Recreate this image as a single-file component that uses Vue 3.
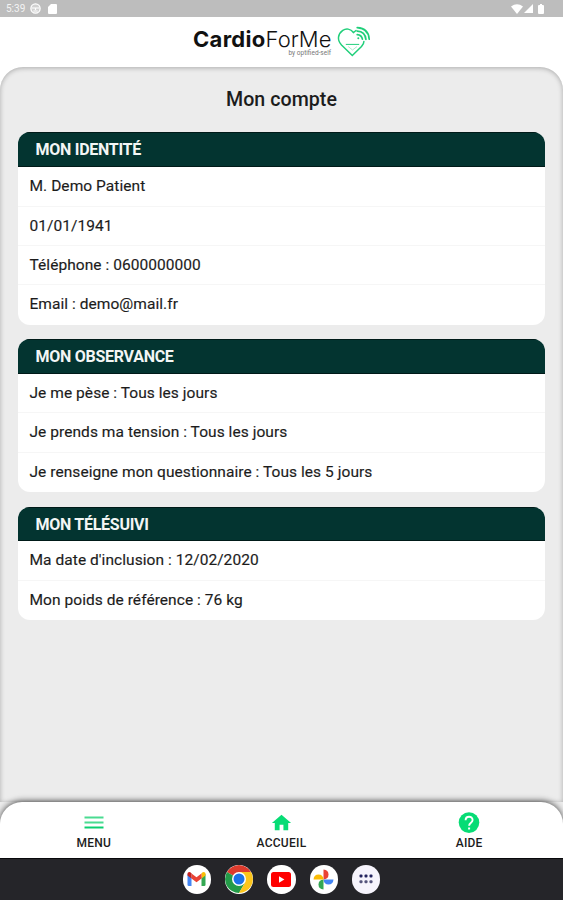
<script setup>
const sections = [
  {
    title: 'MON IDENTITÉ',
    rows: ['M. Demo Patient', '01/01/1941', 'Téléphone : 0600000000', 'Email : demo@mail.fr'],
  },
  {
    title: 'MON OBSERVANCE',
    rows: [
      'Je me pèse : Tous les jours',
      'Je prends ma tension : Tous les jours',
      'Je renseigne mon questionnaire : Tous les 5 jours',
    ],
  },
  {
    title: 'MON TÉLÉSUIVI',
    rows: ["Ma date d'inclusion : 12/02/2020", 'Mon poids de référence : 76 kg'],
  },
]
</script>

<template>
  <div class="screen">
    <div class="status">
      <div class="status-group">
        <span class="time">5:39</span>
        <svg class="status-face" width="11" height="11" viewBox="0 0 11 11">
          <circle cx="5.5" cy="5.5" r="4.6" fill="#d0d0d0" stroke="#fff" stroke-width="1.3" />
          <path d="M2 5h7M5.5 5v2M3.3 8h4.4" stroke="#fff" stroke-width="1.2" />
        </svg>
        <svg width="9" height="10" viewBox="0 0 9 10">
          <path d="M3 0h5q1 0 1 1v8q0 1-1 1H1q-1 0-1-1V3z" fill="#fff" />
        </svg>
      </div>
      <div class="status-group right">
        <svg width="12" height="10" viewBox="0 0 12 10">
          <path d="M0 2.6Q6-2 12 2.6L6 10z" fill="#fff" />
        </svg>
        <svg width="9" height="9" viewBox="0 0 9 9"><path d="M9 0v9H0z" fill="#fff" /></svg>
        <svg class="battery" width="6" height="10" viewBox="0 0 6 10">
          <path d="M2 0h2v1h1q1 0 1 1v7q0 1-1 1H1q-1 0-1-1V2q0-1 1-1h1z" fill="#fff" />
        </svg>
      </div>
    </div>

    <header class="brand">
      <div class="wordmark">
        <div class="name"><b>Cardio</b><span>ForMe</span></div>
        <div class="byline">by optified-self</div>
      </div>
      <svg class="heart" width="34" height="32" viewBox="0 0 34 32" fill="none" stroke="#20cf7a" stroke-width="1.5" stroke-linecap="round">
        <path d="M16.5 6.5C13.5 2.5 9 2.2 5.8 4.4C.8 8-.2 14 4.5 19L15.3 29.5L24.5 20.5Q27 17.5 26.9 15.5" />
        <path d="M16.5 6.5L19 4.5" />
        <path d="M9.2 18.4h12.6" stroke-width="1" />
        <path d="M11.5 20.8L15.5 24l4.2-3.2" stroke-width=".7" opacity=".55" />
        <path d="M20.2 1.6Q31.6 2.2 32.2 13.2M20.2 5.1Q28.2 5.5 28.9 13.4M20.2 8.6Q24.8 9 25.4 13.2" stroke-width="1.7" />
        <circle cx="21.3" cy="12.2" r="1" fill="#20cf7a" stroke="none" />
      </svg>
    </header>

    <main class="content">
      <h1>Mon compte</h1>
      <section v-for="section in sections" :key="section.title" class="card">
        <h2>{{ section.title }}</h2>
        <div v-for="row in section.rows" :key="row" class="row">{{ row }}</div>
      </section>
    </main>

    <div class="nav-wrap">
      <nav class="nav">
        <a class="tab">
          <svg width="22" height="22" viewBox="0 0 22 22">
            <path d="M1.5 5.5h19M1.5 10.5h19" stroke="#4bdb91" stroke-width="2" />
            <path d="M1.5 15.5h19" stroke="#0bcf70" stroke-width="2" />
          </svg>
          <span>MENU</span>
        </a>
        <a class="tab">
          <svg width="23" height="22" viewBox="0 0 24 24" preserveAspectRatio="none">
            <path d="M10 20v-6h4v6h5v-8h3L12 3 2 12h3v8z" fill="#07dc75" />
          </svg>
          <span>ACCUEIL</span>
        </a>
        <a class="tab">
          <svg width="24" height="22" viewBox="0 0 24 22">
            <circle cx="12" cy="10.6" r="10.3" fill="#07dc75" />
            <path d="M8.6 8.2C8.6 3.6 15.6 3.6 15.6 8.1C15.6 10.8 12.1 10.7 12.1 13.8" fill="none" stroke="#fff" stroke-width="1.9" />
            <path d="M11.1 15.5h2v2h-2z" fill="#fff" />
          </svg>
          <span>AIDE</span>
        </a>
      </nav>
    </div>

    <div class="dock">
      <div class="app">
        <svg width="19" height="14" viewBox="0 0 18 14">
          <path d="M0 2v10.7Q0 14 1.3 14H4V5z" fill="#4285f4" />
          <path d="M14 5v9h2.7Q18 14 18 12.7V2z" fill="#34a853" />
          <path d="M14 1.4V6.5l4-3V2C18 .1 16 -.5 14.5 .7z" fill="#fbbc04" />
          <path d="M4 1.4L9 5.2l5-3.8v5L9 10.2 4 6.4z" fill="#ea4335" />
          <path d="M0 2v1.5l4 3V1.4L3.5.7C2-.5 0 .1 0 2z" fill="#c5221f" />
        </svg>
      </div>
      <div class="app">
        <svg width="28" height="28" viewBox="0 0 28 28">
          <path d="M14 14L1.9 7A14 14 0 0 1 26.1 7z" fill="#dd3b2d" />
          <path d="M14 14L1.9 7A14 14 0 0 0 14 28L20.1 17.5z" fill="#239b48" />
          <path d="M14 7h12.1A14 14 0 0 1 14 28l6.1-10.5z" fill="#fcc51c" />
          <circle cx="14" cy="14" r="7" fill="#fff" />
          <circle cx="14" cy="14" r="5.5" fill="#1b72e8" />
        </svg>
      </div>
      <div class="app">
        <svg width="20" height="15" viewBox="0 0 20 15">
          <rect width="20" height="15" rx="2.5" fill="#f00" />
          <path d="M8 4.3v6.4l5.4-3.2z" fill="#fff" />
        </svg>
      </div>
      <div class="app">
        <svg width="21" height="21" viewBox="0 0 21 21">
          <path d="M10.5 0.5Q15.5 1 15.5 5.5T10.5 10.5z" fill="#ea4335" />
          <path d="M20.5 10.5Q20 15.5 15.5 15.5T10.5 10.5z" fill="#4285f4" />
          <path d="M10.5 20.5Q5.5 20 5.5 15.5T10.5 10.5z" fill="#34a853" />
          <path d="M0.5 10.5Q1 5.5 5.5 5.5T10.5 10.5z" fill="#fbbc04" />
        </svg>
      </div>
      <div class="app pale">
        <svg width="14" height="10" viewBox="0 0 14 10">
          <g fill="#24245f">
            <rect x=".5" y=".5" width="3" height="3" rx="1" />
            <rect x="5.5" y=".5" width="3" height="3" rx="1" />
            <rect x="10.5" y=".5" width="3" height="3" rx="1" />
          </g>
          <g fill="#55557c">
            <rect x=".5" y="6.3" width="3" height="3" rx="1" />
            <rect x="5.5" y="6.3" width="3" height="3" rx="1" />
            <rect x="10.5" y="6.3" width="3" height="3" rx="1" />
          </g>
        </svg>
      </div>
    </div>
  </div>
</template>

<style>
body {
  margin: 0;
}
</style>

<style scoped>
.screen {
  width: 563px;
  height: 900px;
  display: flex;
  flex-direction: column;
  overflow: hidden;
  background: #fff;
  font-family: Roboto, 'Liberation Sans', sans-serif;
  color: #1c1c1c;
}
.status {
  flex: none;
  box-sizing: border-box;
  height: 17px;
  padding: 0 19px 0 6px;
  display: flex;
  justify-content: space-between;
  align-items: center;
  background: #bdbdbd;
}
.status-group {
  display: flex;
  align-items: center;
}
.status-group.right {
  gap: 1px;
}
.time {
  width: 23px;
  font-size: 10px;
  line-height: 19px;
  color: #f4f4f4;
}
.status-face {
  margin: 0 7px 0 1px;
}
.battery {
  margin-left: 4px;
}
.brand {
  flex: none;
  height: 50px;
  display: flex;
  justify-content: center;
  align-items: flex-start;
  gap: 6px;
}
.wordmark {
  padding-top: 12px;
  width: 139px;
}
.name {
  padding-left: 1px;
  font-family: Inter, sans-serif;
  font-size: 22px;
  line-height: 20px;
  letter-spacing: 0.15px;
  white-space: nowrap;
  color: #111;
}
.name b {
  font-weight: 700;
  letter-spacing: 0.3px;
}
.name span {
  font-weight: 300;
  letter-spacing: 0;
}
.byline {
  font-size: 6.5px;
  line-height: 8px;
  text-align: right;
  color: #777;
}
.heart {
  margin-top: 9px;
}
.content {
  flex: none;
  box-sizing: border-box;
  height: 735px;
  padding: 19px 18px 0;
  border-radius: 23px 23px 0 0;
  background: #ececec;
  box-shadow: inset 0 1px 5px rgba(0, 0, 0, 0.28);
}
h1 {
  margin: 0 0 19.4px;
  font-size: 19.6px;
  line-height: 27px;
  letter-spacing: 0.05px;
  font-weight: 500;
  text-align: center;
}
.card {
  margin-bottom: 14.6px;
  border-radius: 12px;
  overflow: hidden;
  background: #fff;
}
h2 {
  box-sizing: border-box;
  height: 34.8px;
  margin: 0;
  padding-left: 17.5px;
  border-top: 1px solid #001a18;
  border-bottom: 1px solid #001a18;
  background: #033430;
  color: #f3f6f5;
  font-size: 16px;
  line-height: 33.4px;
  letter-spacing: -0.27px;
  font-weight: 700;
}
.row {
  box-sizing: border-box;
  height: 39.35px;
  padding-left: 11.5px;
  border-bottom: 1px solid #f6f6f6;
  font-size: 15.5px;
  line-height: 39px;
  letter-spacing: 0.055px;
  white-space: nowrap;
  -webkit-text-stroke: 0.15px #1c1c1c;
}
.row:last-child {
  border-bottom: 0;
}
.nav-wrap {
  flex: none;
  height: 56px;
  background: #ececec;
}
.nav {
  box-sizing: border-box;
  height: 56px;
  padding-top: 10px;
  display: grid;
  grid-template-columns: repeat(3, 1fr);
  border-radius: 22px 22px 0 0;
  background: #fff;
  box-shadow: 0 -1px 6px rgba(0, 0, 0, 0.65);
}
.tab {
  display: flex;
  flex-direction: column;
  align-items: center;
  font-size: 12px;
  line-height: 18px;
  letter-spacing: 0.25px;
  font-weight: 500;
}
.dock {
  flex: 1;
  display: flex;
  justify-content: center;
  align-items: center;
  gap: 14px;
  border-top: 1px solid #09090b;
  background: #252529;
}
.app {
  width: 28.3px;
  height: 28.3px;
  display: flex;
  justify-content: center;
  align-items: center;
  border-radius: 50%;
  background: #fff;
  overflow: hidden;
}
.app.pale {
  background: #f6f4fc;
}
</style>
